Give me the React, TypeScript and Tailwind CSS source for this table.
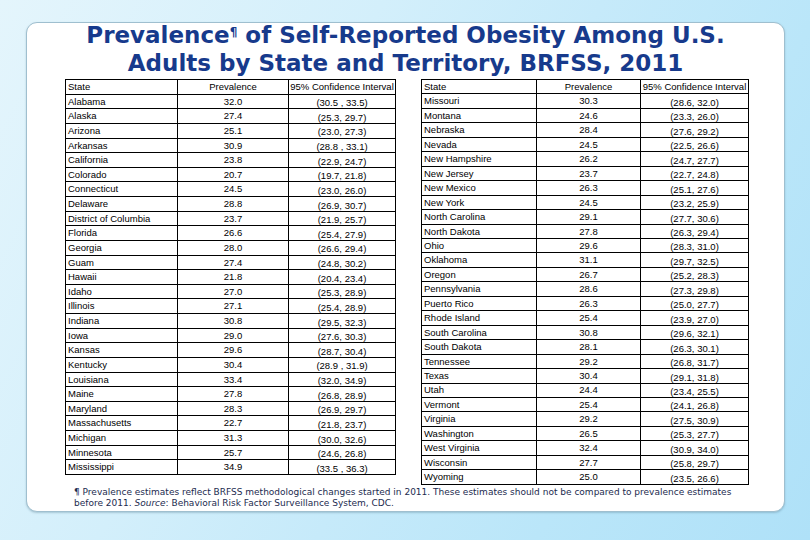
import React from "react";

type Row = [string, string, string];

const leftRows: Row[] = [
  ["Alabama", "32.0", "(30.5 , 33.5)"],
  ["Alaska", "27.4", "(25.3, 29.7)"],
  ["Arizona", "25.1", "(23.0, 27.3)"],
  ["Arkansas", "30.9", "(28.8 , 33.1)"],
  ["California", "23.8", "(22.9, 24.7)"],
  ["Colorado", "20.7", "(19.7, 21.8)"],
  ["Connecticut", "24.5", "(23.0, 26.0)"],
  ["Delaware", "28.8", "(26.9, 30.7)"],
  ["District of Columbia", "23.7", "(21.9, 25.7)"],
  ["Florida", "26.6", "(25.4, 27.9)"],
  ["Georgia", "28.0", "(26.6, 29.4)"],
  ["Guam", "27.4", "(24.8, 30.2)"],
  ["Hawaii", "21.8", "(20.4, 23.4)"],
  ["Idaho", "27.0", "(25.3, 28.9)"],
  ["Illinois", "27.1", "(25.4, 28.9)"],
  ["Indiana", "30.8", "(29.5, 32.3)"],
  ["Iowa", "29.0", "(27.6, 30.3)"],
  ["Kansas", "29.6", "(28.7, 30.4)"],
  ["Kentucky", "30.4", "(28.9 , 31.9)"],
  ["Louisiana", "33.4", "(32.0, 34.9)"],
  ["Maine", "27.8", "(26.8, 28.9)"],
  ["Maryland", "28.3", "(26.9, 29.7)"],
  ["Massachusetts", "22.7", "(21.8, 23.7)"],
  ["Michigan", "31.3", "(30.0, 32.6)"],
  ["Minnesota", "25.7", "(24.6, 26.8)"],
  ["Mississippi", "34.9", "(33.5 , 36.3)"],
];

const rightRows: Row[] = [
  ["Missouri", "30.3", "(28.6, 32.0)"],
  ["Montana", "24.6", "(23.3, 26.0)"],
  ["Nebraska", "28.4", "(27.6, 29.2)"],
  ["Nevada", "24.5", "(22.5, 26.6)"],
  ["New Hampshire", "26.2", "(24.7, 27.7)"],
  ["New Jersey", "23.7", "(22.7, 24.8)"],
  ["New Mexico", "26.3", "(25.1, 27.6)"],
  ["New York", "24.5", "(23.2, 25.9)"],
  ["North Carolina", "29.1", "(27.7, 30.6)"],
  ["North Dakota", "27.8", "(26.3, 29.4)"],
  ["Ohio", "29.6", "(28.3, 31.0)"],
  ["Oklahoma", "31.1", "(29.7, 32.5)"],
  ["Oregon", "26.7", "(25.2, 28.3)"],
  ["Pennsylvania", "28.6", "(27.3, 29.8)"],
  ["Puerto Rico", "26.3", "(25.0, 27.7)"],
  ["Rhode Island", "25.4", "(23.9, 27.0)"],
  ["South Carolina", "30.8", "(29.6, 32.1)"],
  ["South Dakota", "28.1", "(26.3, 30.1)"],
  ["Tennessee", "29.2", "(26.8, 31.7)"],
  ["Texas", "30.4", "(29.1, 31.8)"],
  ["Utah", "24.4", "(23.4, 25.5)"],
  ["Vermont", "25.4", "(24.1, 26.8)"],
  ["Virginia", "29.2", "(27.5, 30.9)"],
  ["Washington", "26.5", "(25.3, 27.7)"],
  ["West Virginia", "32.4", "(30.9, 34.0)"],
  ["Wisconsin", "27.7", "(25.8, 29.7)"],
  ["Wyoming", "25.0", "(23.5, 26.6)"],
];

interface StatTableProps {
  rows: Row[];
  widths: [string, string, string];
  rowClass: string;
  tableClass: string;
}

// one half of the state table; header + rows, thin black grid
const StatTable: React.FC<StatTableProps> = ({ rows, widths, rowClass, tableClass }) => (
  <table className={`table-fixed border-collapse border border-black text-[9.5px] text-black ${tableClass}`}>
    <colgroup>
      <col className={widths[0]} />
      <col className={widths[1]} />
      <col className={widths[2]} />
    </colgroup>
    <tbody>
      <tr className={rowClass}>
        <td className="border border-black px-[2px] leading-none">State</td>
        <td className="border border-black text-center leading-none">Prevalence</td>
        <td className="border border-black text-center leading-none whitespace-nowrap">95% Confidence Interval</td>
      </tr>
      {rows.map(([state, prev, ci]) => (
        <tr key={state} className={rowClass}>
          <td className="border border-black px-[2px] leading-none whitespace-nowrap">{state}</td>
          <td className="border border-black text-center leading-none">{prev}</td>
          <td className="border border-black text-center leading-none pt-[3px]">{ci}</td>
        </tr>
      ))}
    </tbody>
  </table>
);

export default function App() {
  return (
    <div className="w-[810px] h-[540px] overflow-hidden bg-[linear-gradient(118deg,#e4f5fc_0%,#d3effb_35%,#c6eafa_55%,#bae6f9_75%,#afe1f8_100%)] pt-[22px] pl-[26px] pr-[25px]">
      <div className="h-[490px] rounded-[11px] border border-[#9fbfcf] bg-white shadow-[0_1px_2px_rgba(80,120,140,0.35)] flex flex-col">
        {/* title */}
        <div className="-mt-[2px] text-center text-[#173a8c] font-bold text-[23px] leading-[28px] font-['DejaVu_Sans',sans-serif]">
          <div>
            Prevalence<span className="relative -top-[7px] text-[12px] leading-[0]">¶</span> of Self-Reported Obesity Among U.S.
          </div>
          <div>Adults by State and Territory, BRFSS, 2011</div>
        </div>

        {/* the two tables */}
        <div className="mt-[2px] flex items-start gap-[25px] pl-[38px] font-['Liberation_Sans',Arial,sans-serif]">
          <StatTable
            rows={leftRows}
            widths={["w-[112px]", "w-[111px]", "w-[107px]"]}
            rowClass="h-[14.63px]"
            tableClass="w-[330px]"
          />
          <StatTable
            rows={rightRows}
            widths={["w-[115px]", "w-[104px]", "w-[108px]"]}
            rowClass="h-[14.46px]"
            tableClass="w-[327px]"
          />
        </div>

        {/* footnote */}
        <div className="mt-[2px] pl-[47px] pr-[20px] text-[#1c2b4f] text-[9px] leading-[11px] font-['DejaVu_Sans',sans-serif]">
          <div className="whitespace-nowrap">
            ¶ Prevalence estimates reflect BRFSS methodological changes started in 2011. These estimates should not be compared to prevalence estimates
          </div>
          <div>
            before 2011. <span className="italic">Source</span>: Behavioral Risk Factor Surveillance System, CDC.
          </div>
        </div>
      </div>
    </div>
  );
}
